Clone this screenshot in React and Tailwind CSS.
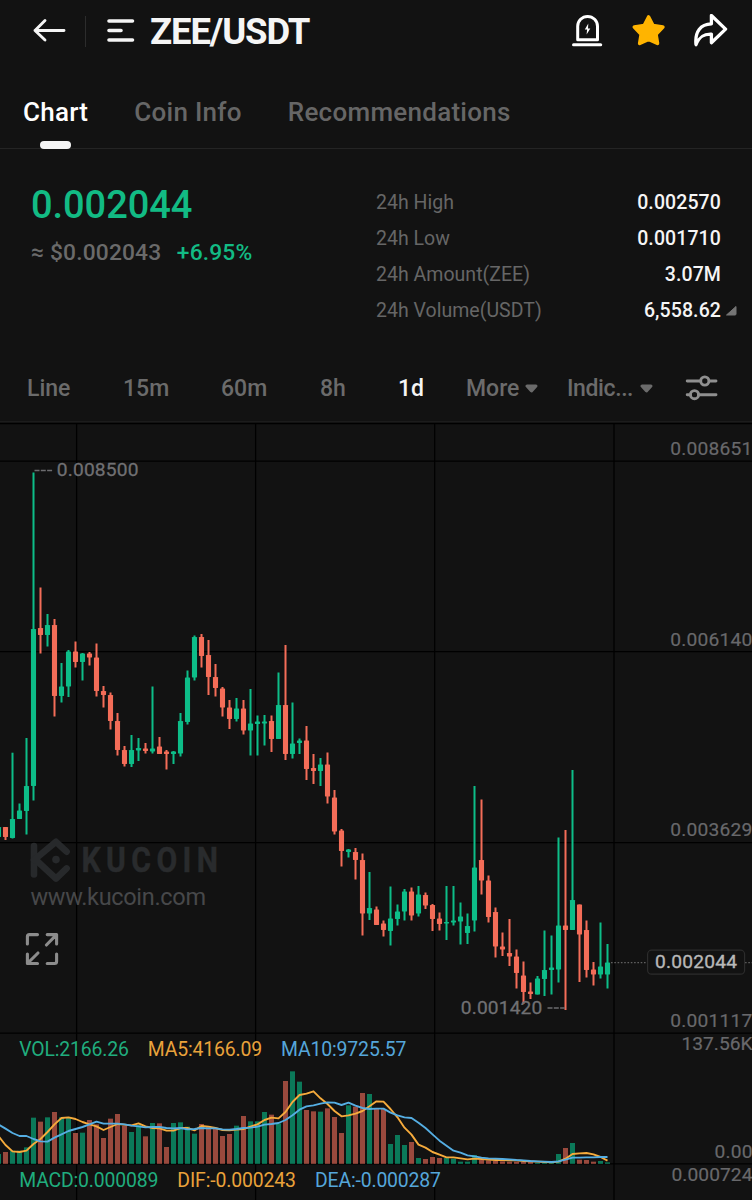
import React from "react";

// Candle: [direction, high, open/close top, open/close bottom, low] in chart-space pixels
const CANDLES = [
  ["g", 827, 827, 837, 837], ["r", 827, 827, 837, 840], ["g", 752.7, 819, 838, 838.5], ["g", 803.5, 810.5, 819, 819],
  ["g", 738, 786, 811, 834.5], ["g", 472.5, 629, 786, 800.5], ["r", 587.5, 628, 635, 653.5], ["g", 614, 625, 635, 646.5],
  ["r", 619, 625, 696, 716.5], ["g", 663, 686.5, 696, 702.5], ["g", 650, 651.5, 686.5, 697], ["r", 641.5, 651.5, 662, 667.5],
  ["g", 653, 653.5, 662, 680.5], ["r", 652, 653.5, 657.5, 665.5], ["r", 643.5, 657.5, 691, 696.5], ["r", 686, 691, 695, 707.5],
  ["r", 692.5, 695, 721, 729.5], ["r", 713, 721, 750, 755.5], ["r", 746, 750, 764, 766.5], ["g", 735, 750, 764, 767],
  ["g", 738, 748, 750.5, 761], ["r", 743, 748.5, 751, 753.5], ["g", 686.5, 748.5, 751.5, 753.5], ["r", 737, 746.5, 754, 754],
  ["r", 750, 751.5, 754, 769.5], ["g", 751, 751.5, 754, 764], ["g", 713, 721, 753.5, 756.5], ["g", 670.5, 677.5, 722, 724.5],
  ["g", 635.5, 637, 677.5, 680.5], ["r", 634, 637, 656, 667.5], ["r", 640, 655, 677, 695], ["r", 664, 677, 688, 696.5],
  ["r", 687, 688.5, 707.5, 716.5], ["r", 700, 707.5, 719, 729], ["g", 698, 708.5, 719, 721.5], ["r", 700, 708.5, 730.5, 734.5],
  ["g", 689, 723.5, 730.5, 755.5], ["g", 715.5, 721.5, 724, 755.5], ["g", 715, 721.5, 723.5, 745.5], ["r", 715.5, 721, 739, 752],
  ["g", 672.5, 705, 739, 739], ["r", 645, 705, 754, 760], ["g", 702.5, 743.5, 754, 758.5], ["g", 738.5, 740.5, 743, 754],
  ["r", 726, 740.5, 769, 780], ["r", 754, 768, 771, 784], ["g", 758, 764.5, 771, 786], ["r", 752.5, 764.5, 796.5, 803.5],
  ["r", 790, 797.5, 831.5, 834.5], ["r", 829, 830.5, 851, 866.5], ["g", 849, 849.5, 852, 857.5], ["r", 848, 852, 860, 879.5],
  ["r", 853.5, 860, 913.5, 935.5], ["g", 872, 908, 913.5, 920], ["r", 906.5, 909.5, 925, 925], ["r", 920.5, 923.5, 930, 936.5],
  ["g", 886.5, 918.5, 931, 945.5], ["g", 904.5, 911.5, 919, 925.5], ["g", 889, 891.5, 911.5, 920.5], ["r", 887.5, 891.5, 915.5, 920.5],
  ["g", 886, 894.5, 913.5, 916.5], ["r", 892.5, 895, 905.5, 909], ["r", 904, 905, 919, 931], ["r", 912.5, 918.5, 924, 930.5],
  ["g", 886, 922, 923.5, 940], ["g", 886, 920.5, 922.5, 925.5], ["g", 902.5, 916.5, 921.5, 944.5], ["g", 913.5, 926, 933, 944],
  ["g", 786, 867.5, 920.5, 931.5], ["r", 799.5, 860, 880.5, 894.5], ["r", 875.5, 880.5, 917, 922.5], ["r", 907.5, 912, 946.5, 957.5],
  ["r", 932.5, 946.5, 949.5, 956], ["r", 919, 953, 956.5, 966], ["r", 949.5, 956.5, 973, 988.5], ["r", 961.5, 975.5, 992, 1004],
  ["r", 982.5, 991.5, 994, 999], ["g", 976, 978.5, 994.5, 994.5], ["g", 930.5, 970, 979, 996], ["g", 935.5, 967.5, 970, 994.5],
  ["g", 837.5, 925.5, 969.5, 982.5], ["r", 830, 925.5, 930, 1010], ["g", 770, 900, 930, 930], ["r", 904.5, 904.5, 934.5, 982],
  ["r", 920.5, 930, 970, 977.5], ["r", 962, 969.5, 974.5, 985.5], ["g", 922.5, 966.5, 974.5, 978.5], ["g", 944, 962.5, 974.5, 988.5],
];

// Bar tops and moving averages, in thirds of a pixel below the volume panel's top
const VOLUMES = [
  372, 366, 362, 362, 352, 263, 275, 262, 246, 262, 263, 309, 308, 270, 283, 324, 266, 252, 287, 306, 285, 319, 279, 280, 351, 279, 277, 290, 311,
  282, 290, 294, 318, 312, 287, 258, 274, 274, 246, 254, 280, 153, 124, 155, 240, 244, 245, 235, 261, 309, 226, 230, 189, 192, 235, 237, 342, 315,
  345, 336, 384, 387, 381, 384, 384, 386, 395, 395, 375, 390, 391, 393, 394, 395, 395, 396, 396, 398, 399, 398, 372, 354, 339, 389, 390, 395, 393, 397,
];
const MA5 = [
  318, 345, 364, 366, 362, 342, 327, 306, 283, 264, 262, 267, 276, 283, 289, 300, 291, 282, 284, 286, 280, 289, 294, 295, 302, 302, 294, 294, 301,
  288, 290, 294, 300, 301, 299, 297, 290, 283, 270, 263, 265, 246, 216, 195, 191, 184, 205, 222, 243, 259, 256, 251, 243, 229, 214, 215, 237, 262,
  293, 314, 344, 353, 366, 374, 382, 382, 385, 388, 386, 387, 389, 390, 390, 391, 391, 393, 394, 395, 396, 397, 395, 386, 372, 370, 369, 373, 381, 392,
];
const MA10 = [
  283, 296, 309, 318, 318, 327, 334, 335, 323, 313, 303, 297, 291, 283, 275, 281, 281, 281, 283, 287, 289, 292, 291, 291, 294, 295, 294, 298, 297,
  294, 295, 295, 298, 299, 297, 294, 293, 290, 284, 282, 279, 270, 256, 239, 229, 226, 221, 217, 218, 225, 218, 227, 234, 237, 236, 236, 248, 256,
  262, 264, 278, 294, 313, 332, 347, 362, 368, 376, 379, 383, 385, 386, 387, 388, 390, 391, 393, 394, 395, 396, 394, 389, 383, 383, 382, 382, 381, 381,
];

const xAt = (i) => -1.5 + 7 * i;
const volY = (v) => 1030 + v / 3;
const line = (series) => series.map((v, i) => `${xAt(i)},${volY(v)}`).join(" ");

function BackIcon() {
  return (
    <svg width="34" height="26" viewBox="0 0 34 26" fill="none" stroke="#f5f5f5" strokeWidth="2.9" strokeLinecap="round" strokeLinejoin="round">
      <path d="M32 12.5H3M13 2.5L3 12.5L13 22" />
    </svg>
  );
}

function AlertIcon() {
  return (
    <svg width="32" height="34" viewBox="0 0 32 34" fill="none" stroke="#fff" strokeWidth="3" strokeLinecap="round" strokeLinejoin="round">
      <path d="M6.7 25.8V12.3a9.9 9.9 0 0 1 19.8 0V25.8Z" />
      <path d="M2.5 30.7H29.7" />
      <path d="M17.3 9.5L13.8 15.5h2.3l-.5 5L19.3 14.4h-2.3Z" fill="#fff" stroke="none" />
    </svg>
  );
}

function StarIcon() {
  return (
    <svg width="36" height="34" viewBox="0 0 36 34">
      <path
        d="M18.6 3L23 11.5L32.9 13L26 20.2L27.5 29.4L18.6 25.4L9.7 29.4L11.2 20.2L4.3 13L14.2 11.5Z"
        fill="#ffb400" stroke="#ffb400" strokeWidth="3.6" strokeLinejoin="round"
      />
    </svg>
  );
}

function ShareIcon() {
  return (
    <svg width="36" height="34" viewBox="0 0 36 34" fill="none" stroke="#fff" strokeWidth="3.3" strokeLinejoin="round">
      <path d="M18.4 1.5L32.6 15.1L18.4 28.7V20.1C10.7 19.8 6.2 22.5 3 30.7C1.6 17.5 7.7 10.1 18.4 9.8Z" />
    </svg>
  );
}

function Caret() {
  return (
    <svg width="13" height="10" viewBox="0 0 13 10">
      <path d="M2 2H11L6.5 7Z" fill="#6b6b6b" stroke="#6b6b6b" strokeWidth="3" strokeLinejoin="round" />
    </svg>
  );
}

function SlidersIcon() {
  return (
    <svg className="-mt-0.5" width="34" height="28" viewBox="0 0 34 28" fill="none" stroke="#8f8f8f" strokeWidth="2.9" strokeLinecap="round">
      <path d="M2.2 7H15.3M24.3 7H31M2.2 20.7H5.5M13.5 20.7H31" />
      <circle cx="19.8" cy="7" r="4.1" />
      <circle cx="9.5" cy="20.7" r="4.1" />
    </svg>
  );
}

function Stat({ label, value, marker }) {
  return (
    <div className="flex h-9 items-center">
      <span className="tracking-[0.02px] text-[#666666]">{label}</span>
      <span className="ml-auto font-medium tracking-[0.1px] text-[#f5f5f5]">{value}</span>
      <span className="flex w-4 justify-end">
        {marker && (
          <svg width="12" height="12" viewBox="0 0 12 12">
            <path d="M11 1.5V9a1 1 0 0 1-1 1H1.5Z" fill="#757575" stroke="#757575" strokeLinejoin="round" />
          </svg>
        )}
      </span>
    </div>
  );
}

function Watermark() {
  return (
    <g>
      <g fill="none" stroke="#27292b" strokeWidth="6.6" strokeLinecap="round" strokeLinejoin="round">
        <path d="M34 846V874.5" />
        <path d="M34 860L56 841.8L66.6 851.7M36 860L56 878.6L66.6 868.4" />
      </g>
      <circle cx="56" cy="859.6" r="3.8" fill="#27292b" />
      <text
        transform="translate(81.5 872.4) scale(0.86 1)" fontSize="35" fontWeight="700" letterSpacing="6.3"
        fill="#292b2d" stroke="#292b2d" strokeWidth="0.5"
      >
        KUCOIN
      </text>
      <text x="30.5" y="905.4" fontSize="23.5" textLength="175.5" fill="#47484a">www.kucoin.com</text>
      <g fill="none" stroke="#8c8c8c" strokeWidth="3.1" strokeLinecap="round" strokeLinejoin="round">
        <path d="M27.4 944V936.6a2 2 0 0 1 2-2H37.5M47.2 934.6H56.6V944M55.6 935.6L46.4 945M56.6 954V961.5a2 2 0 0 1-2 2H47.2M37.5 963.5H27.4V954M28.4 962.5L38 953" />
      </g>
    </g>
  );
}

function PriceChart() {
  return (
    <svg className="block" width="752" height="778" viewBox="0 422 752 778" fontFamily='Roboto, "Noto Sans", sans-serif'>
      <g stroke="#000" strokeWidth="1.25">
        {[76.6, 255.6, 434.7, 614].map((x) => <path key={x} d={`M${x} 423V1200`} />)}
        {[423.5, 461, 651.7, 842.5, 1033.2, 1163.8].map((y) => <path key={y} d={`M0 ${y}H752`} />)}
      </g>
      <Watermark />
      <g>
        {CANDLES.map(([dir, high, top, bottom, low], i) => (
          <g key={i} fill={dir === "g" ? "#0dbd88" : "#f46d58"}>
            <rect x={xAt(i) - 1} y={high} width="2" height={low - high} />
            <rect x={xAt(i) - 2.55} y={top} width="5.1" height={bottom - top} rx="0.4" />
          </g>
        ))}
      </g>
      <g>
        {VOLUMES.map((v, i) => (
          <rect key={i} x={xAt(i) - 2.5} y={volY(v)} width="5" height={1163.8 - volY(v)} fill={CANDLES[i][0] === "g" ? "#0b7959" : "#99493d"} />
        ))}
      </g>
      <polyline points={line(MA5)} fill="none" stroke="#f6ab3c" strokeWidth="1.9" strokeLinejoin="round" />
      <polyline points={line(MA10)} fill="none" stroke="#55aee3" strokeWidth="1.9" strokeLinejoin="round" />
      <g stroke="#6c6c6f" strokeWidth="1.6" strokeDasharray="5 1.3">
        <path d="M34.5 470.5H52.5M547.5 1008H566" />
      </g>
      <path d="M611 962.6H648M745 962.6H752" stroke="#606060" strokeWidth="1.2" strokeDasharray="1.6 1.7" />
      <g fontSize="19.2" fill="#707073" stroke="#707073" strokeWidth="0.3">
        <text x="56.8" y="476" textLength="81.7">0.008500</text>
        <text x="460.8" y="1014" textLength="81.5">0.001420</text>
      </g>
      <g fontSize="19.2" fill="#68686b" stroke="#68686b" strokeWidth="0.2">
        <text x="670.3" y="455" textLength="82">0.008651</text>
        <text x="670.3" y="646" textLength="82">0.006140</text>
        <text x="670.3" y="836" textLength="82">0.003629</text>
        <text x="670.3" y="1027" textLength="82">0.001117</text>
        <text x="681.5" y="1050" textLength="71">137.56K</text>
        <text x="714.5" y="1158" textLength="38">0.00</text>
        <text x="671.5" y="1181" textLength="81">0.000724</text>
      </g>
      <rect x="647.6" y="950.2" width="97" height="24" rx="4" fill="#121212" stroke="#2c2c2c" strokeWidth="1.2" />
      <text x="655" y="968.4" fontSize="19.2" textLength="82" fill="#b8b8b8" stroke="#b8b8b8" strokeWidth="0.35">0.002044</text>
      <g fontSize="19.4">
        <text x="19.3" y="1056" textLength="109.5" fill="#20ad7e">VOL:2166.26</text>
        <text x="147.8" y="1056" textLength="114.3" fill="#e9a23b">MA5:4166.09</text>
        <text x="281" y="1056" textLength="125.3" fill="#55a6da">MA10:9725.57</text>
        <text x="19.3" y="1187" textLength="139" fill="#20ad7e">MACD:0.000089</text>
        <text x="177.3" y="1187" textLength="118.7" fill="#e9a23b">DIF:-0.000243</text>
        <text x="315" y="1187" textLength="126" fill="#55a6da">DEA:-0.000287</text>
      </g>
    </svg>
  );
}

export default function App() {
  return (
    <div className="h-[1200px] w-[752px] overflow-hidden bg-[#121212] font-['Roboto','Noto_Sans',sans-serif] whitespace-nowrap">
      <header className="flex h-[62px] items-center pl-8">
        <BackIcon />
        <span className="ml-[19px] h-[31px] w-px bg-[#2c2c2c]" />
        <svg className="ml-[21px]" width="28" height="26" viewBox="0 0 28 26" stroke="#f5f5f5" strokeWidth="3.6" strokeLinecap="round">
          <path d="M2 3H25.5M2 12.5H14M2 22H25.5" />
        </svg>
        <h1 className="ml-[15px] pt-px text-[36.5px] leading-[62px] font-bold tracking-[-1.15px] text-[#f5f5f5]">ZEE/USDT</h1>
        <div className="ml-auto flex items-center gap-[27px] pr-[23px]">
          <AlertIcon />
          <StarIcon />
          <ShareIcon />
        </div>
      </header>

      <nav className="flex h-[87px] items-start gap-[46px] border-b border-[#242424] pl-[23px] text-[26px] font-medium tracking-[0.27px] text-[#666666]">
        <div className="flex flex-col items-center text-white">
          <span className="leading-[100px]">Chart</span>
          <span className="-mt-[21px] h-2 w-[31px] rounded-full bg-[#f5f5f5]" />
        </div>
        <span className="leading-[100px]">Coin Info</span>
        <span className="leading-[100px]">Recommendations</span>
      </nav>

      <section className="flex h-[205px] justify-between pt-[34px] pr-[15px] pl-[31px]">
        <div>
          <div className="text-[38px] leading-[44px] font-medium tracking-[-0.05px] text-[#12bb84]">0.002044</div>
          <div className="mt-2.5 flex gap-[15.5px] text-[22.8px] leading-8 font-medium tracking-[0.15px]">
            <span className="text-[#6a6a6a]">≈ $0.002043</span>
            <span className="text-[#12bb84]">+6.95%</span>
          </div>
        </div>
        <div className="w-[361px] pt-[1.5px] text-[19.5px]">
          <Stat label="24h High" value="0.002570" />
          <Stat label="24h Low" value="0.001710" />
          <Stat label="24h Amount(ZEE)" value="3.07M" />
          <Stat label="24h Volume(USDT)" value="6,558.62" marker />
        </div>
      </section>

      <div className="flex h-[68px] items-center border-b border-[#1c1c1c] pt-[3px] pl-[27px] text-[23px] font-medium text-[#6b6b6b]">
        <span className="w-[96px]">Line</span>
        <span className="w-[98px]">15m</span>
        <span className="w-[99px]">60m</span>
        <span className="w-[78px]">8h</span>
        <span className="w-[67px] text-[#f5f5f5]">1d</span>
        <span className="flex w-[101px] items-center gap-[6px] pl-px">More<Caret /></span>
        <span className="flex w-[119px] items-center gap-[7px] pl-px"><span className="tracking-[-0.4px]">Indic...</span><Caret /></span>
        <SlidersIcon />
      </div>

      <PriceChart />
    </div>
  );
}
